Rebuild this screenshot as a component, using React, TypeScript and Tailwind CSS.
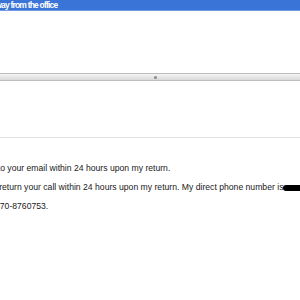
export default function App() {
  return (
    <div className="w-[300px] h-[300px] overflow-hidden bg-white font-['Liberation_Sans',Arial,sans-serif]">
      {/* title bar */}
      <div className="h-[11px] bg-[#3a74d6] border-b border-[#6e9be3] overflow-hidden">
        <div className="text-[8.5px] font-bold leading-[11px] tracking-[-0.8px] text-white -ml-[10px] whitespace-nowrap">
          Away from the office
        </div>
      </div>

      <div className="h-[62px]" />

      {/* splitter */}
      <div className="h-[8px] border-t border-b border-[#bdbdbd] bg-gradient-to-b from-[#f4f4f4] to-[#d9d9d9] flex items-center justify-center">
        <div className="w-[3px] h-[3px] rounded-full bg-[#8a8a8a] ml-[10px]" />
      </div>

      <div className="h-[56px]" />
      <div className="h-px bg-[#e2e2e2]" />

      {/* body */}
      <div className="pt-[21px] text-[8.65px] leading-[19px] text-[#1a1a1a] whitespace-nowrap">
        <p className="-ml-[55px]">I will respond to your email within 24 hours upon my return.</p>
        <p className="-ml-[20px]">
          I will return your call within 24 hours upon my return. My direct phone number is
          <span className="inline-block w-[22px] h-[6px] bg-black align-middle rounded-sm" />
        </p>
        <p className="-ml-[5px]">770-8760753.</p>
      </div>
    </div>
  );
}
